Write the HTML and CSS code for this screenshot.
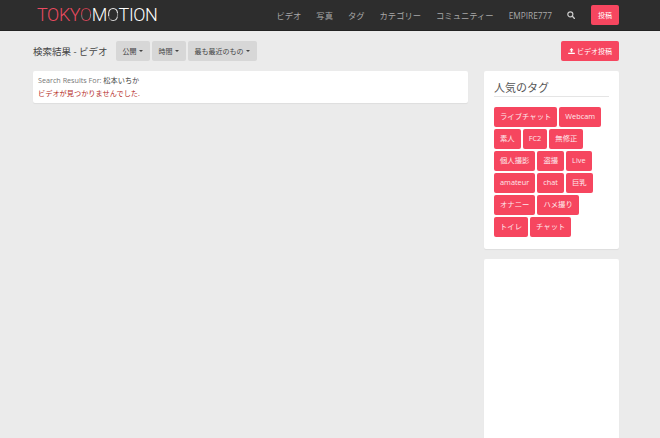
FILE: index.html
```html
<!DOCTYPE html>
<html lang="ja">
<head>
<meta charset="utf-8">
<title>検索結果 - ビデオ</title>
<link rel="stylesheet" href="styles.css">
</head>
<body>
<header class="navbar">
  <div class="wrap nav-inner">
    <a class="logo"><span class="red">TOKY</span><span class="ring ring-red">O</span>M<span class="ring ring-grey">O</span>TION</a>
    <nav class="nav-links">
      <a>ビデオ</a><a>写真</a><a>タグ</a><a>カテゴリー</a><a>コミュニティー</a><a>EMPIRE777</a>
      <a class="search-link"><svg width="8" height="8" viewBox="0 0 12 12"><circle cx="5" cy="5" r="3.8" fill="none" stroke="#ccc" stroke-width="1.8"/><path d="M8 8l3.2 3.2" stroke="#ccc" stroke-width="2" stroke-linecap="round"/></svg></a>
    </nav>
    <a class="btn post">投稿</a>
  </div>
</header>
<main class="wrap">
  <div class="toolbar">
    <h1>検索結果 - ビデオ</h1>
    <div class="filters">
      <a class="filter">公開<i class="caret"></i></a>
      <a class="filter">時間<i class="caret"></i></a>
      <a class="filter">最も最近のもの<i class="caret"></i></a>
    </div>
    <a class="btn upload"><svg width="7" height="6" viewBox="0 0 10 9"><path d="M5 0L8.2 3.4H6.2V6.2H3.8V3.4H1.8zM0 7h10v2H0z" fill="#fff"/></svg>ビデオ投稿</a>
  </div>
  <div class="columns">
    <section class="card results">
      <p class="query">Search Results For: <span class="term">松本いちか</span></p>
      <p class="empty">ビデオが見つかりませんでした.</p>
    </section>
    <aside class="side">
      <div class="card tags-card">
        <h2>人気のタグ</h2>
        <div class="tags">
          <a class="tag">ライブチャット</a><a class="tag">Webcam</a><a class="tag">素人</a><a class="tag">FC2</a><a class="tag">無修正</a><a class="tag">個人撮影</a><a class="tag">盗撮</a><a class="tag">Live</a><a class="tag">amateur</a><a class="tag">chat</a><a class="tag">巨乳</a><a class="tag">オナニー</a><a class="tag">ハメ撮り</a><a class="tag">トイレ</a><a class="tag">チャット</a>
        </div>
      </div>
      <div class="card ad"></div>
    </aside>
  </div>
</main>
</body>
</html>
```
FILE: styles.css
```css
* { box-sizing: border-box; }
html, body { margin: 0; height: 438px; overflow: hidden; }
body {
  background: #ebebeb;
  color: #444;
  font-family: "Open Sans", "Noto Sans CJK JP", sans-serif;
  font-size: 8px;
}
.wrap { width: 586px; margin-left: 33px; }
.navbar { height: 31px; background: #2d2d2d; border-bottom: 1px solid #222; }
.nav-inner { display: flex; align-items: center; height: 30px; }
.logo {
  margin-left: 4px;
  font-family: "Roboto", sans-serif;
  font-weight: 300;
  font-size: 18px;
  letter-spacing: -0.4px;
  color: #fff;
  line-height: 30px;
}
.red { color: #ea4a60; }
.ring { -webkit-background-clip: text; background-clip: text; color: transparent; }
.ring-red { background-image: conic-gradient(#c9404f 0 25%, #8a8a8a 25% 35%, #d8465a 35% 60%, #777 60% 72%, #c9404f 72%); }
.ring-grey { background-image: conic-gradient(#eee 0 20%, #888 20% 33%, #ddd 33% 55%, #777 55% 70%, #eee 70%); }
.nav-links { display: flex; align-items: center; margin-left: auto; gap: 15px; font-size: 8.3px; color: #a8a8a8; }
.search-link { display: flex; }
.btn {
  display: flex;
  align-items: center;
  justify-content: center;
  background: #f6465f;
  color: #fff;
  border-radius: 2px;
  font-size: 7px;
}
.post { width: 28px; height: 20px; margin-left: 16px; }
.toolbar { display: flex; align-items: center; height: 20px; margin-top: 10px; }
h1 { margin: 0; font-size: 9.5px; font-weight: 400; color: #444; }
.filters { display: flex; gap: 2px; margin-left: 8px; }
.filter {
  display: flex;
  align-items: center;
  height: 20px;
  padding: 0 7px;
  background: #d7d7d7;
  border-radius: 2px;
  font-size: 7px;
  color: #444;
}
.caret {
  width: 0;
  height: 0;
  margin-left: 2px;
  border-top: 2px solid #444;
  border-left: 2px solid transparent;
  border-right: 2px solid transparent;
}
.upload { margin-left: auto; width: 58px; height: 20px; gap: 2px; }
.columns { display: flex; justify-content: space-between; margin-top: 10px; }
.card { background: #fff; border-radius: 2px; box-shadow: 0 1px 1px rgba(0,0,0,.06); }
.results { width: 435px; height: 32px; padding: 3px 5px; }
.results p { margin: 0; font-size: 7.2px; line-height: 13px; }
.query { color: #777; }
.term { color: #444; }
.empty { color: #b52b27; }
.side { width: 135px; display: flex; flex-direction: column; gap: 10px; }
.tags-card { height: 178px; padding: 10px; }
h2 {
  margin: 0 0 10px;
  height: 16px;
  border-bottom: 1px solid #e5e5e5;
  font-size: 11px;
  line-height: 14px;
  font-weight: 400;
  color: #555;
}
.tags { display: flex; flex-wrap: wrap; gap: 2px; }
.tag {
  height: 20px;
  padding: 0 6px;
  line-height: 19px;
  background: #f6465f;
  border-radius: 2px;
  color: #fde8ec;
  font-size: 7.35px;
}
.ad { height: 200px; }
```
